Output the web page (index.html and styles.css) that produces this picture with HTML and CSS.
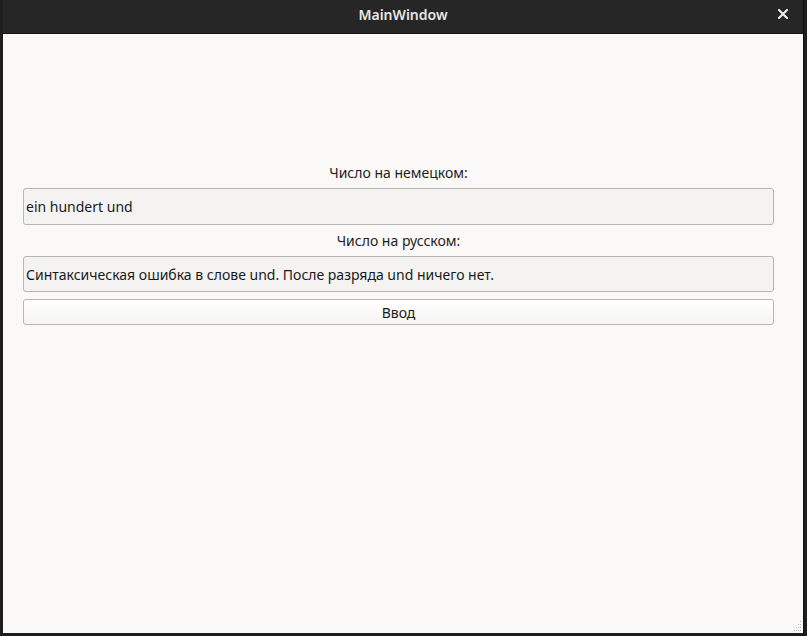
FILE: index.html
```html
<!DOCTYPE html>
<html lang="ru">
<head>
<meta charset="utf-8">
<title>MainWindow</title>
<link rel="stylesheet" href="styles.css">
</head>
<body>
<div class="desktop">
  <div class="window">
    <div class="titlebar">
      <span class="title">MainWindow</span>
      <span class="close" aria-label="close">
        <svg width="10" height="10" viewBox="0 0 10 10"><path d="M1 1 L9 9 M9 1 L1 9" stroke="#f0f0f0" stroke-width="2" stroke-linecap="square"/></svg>
      </span>
    </div>
    <div class="content">
      <div class="form">
        <div class="label">Число на немецком:</div>
        <div class="field">ein hundert und</div>
        <div class="label label2">Число на русском:</div>
        <div class="field field2">Синтаксическая ошибка в слове und. После разряда und ничего нет.</div>
        <div class="button">Ввод</div>
      </div>
      <svg class="grip" width="12" height="12" viewBox="0 0 12 12">
        <g fill="#b8b6b2">
          <rect x="10" y="1" width="1" height="1"/>
          <rect x="8" y="4" width="1" height="1"/><rect x="10" y="4" width="1" height="1"/>
          <rect x="6" y="7" width="1" height="1"/><rect x="8" y="7" width="1" height="1"/><rect x="10" y="7" width="1" height="1"/>
          <rect x="4" y="10" width="1" height="1"/><rect x="6" y="10" width="1" height="1"/><rect x="8" y="10" width="1" height="1"/><rect x="10" y="10" width="1" height="1"/>
        </g>
      </svg>
    </div>
  </div>
  <div class="side"></div>
</div>
</body>
</html>
```
FILE: styles.css
```css
html, body {
  margin: 0;
  padding: 0;
  background: #1e1e1e;
  width: 807px;
  height: 636px;
  overflow: hidden;
}
.desktop {
  display: flex;
  height: 636px;
}
.window {
  margin-left: 3px;
  width: 800px;
  height: 633px;
  display: flex;
  flex-direction: column;
}
.titlebar {
  height: 33px;
  background: #262626;
  border-bottom: 1px solid #141414;
  display: flex;
  align-items: center;
  justify-content: center;
  position: relative;
  font-family: "Noto Sans", "Open Sans", sans-serif;
  font-weight: 600;
  font-size: 14px;
  color: #e6e6e6;
}
.title {
  padding-bottom: 4px;
}
.close {
  position: absolute;
  right: 14px;
  top: 8px;
  width: 12px;
  height: 12px;
  display: flex;
  align-items: center;
  justify-content: center;
}
.content {
  flex: 1;
  background: #faf9f7;
  position: relative;
  font-family: "Noto Sans", "Open Sans", sans-serif;
  font-size: 14px;
  color: #2e3436;
}
.form {
  padding: 129px 29px 0 20px;
  display: flex;
  flex-direction: column;
}
.label {
  height: 20px;
  line-height: 20px;
  text-align: center;
  margin-bottom: 5px;
  color: #1e1e1e;
}
.label2 {
  margin-top: 6px;
}
.field {
  height: 35px;
  border: 1px solid #b8b7b3;
  border-radius: 3px;
  background: #f4f3f1;
  padding-left: 2px;
  display: flex;
  align-items: center;
  color: #1a1a1a;
  box-sizing: content-box;
}
.field2 {
  height: 34px;
}
.button {
  margin-top: 7px;
  height: 24px;
  border: 1px solid #b8b7b3;
  border-radius: 3px;
  background: linear-gradient(#ffffff, #f5f4f2);
  display: flex;
  align-items: center;
  justify-content: center;
  color: #1a1a1a;
}
.grip {
  position: absolute;
  right: 1px;
  bottom: 1px;
}
.side {
  width: 4px;
  height: 636px;
  background: #1e1e1e;
  border-left: 1px solid #101010;
  box-sizing: border-box;
}
```
